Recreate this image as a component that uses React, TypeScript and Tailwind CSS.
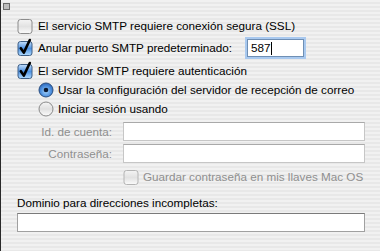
import React from 'react';

function Checkbox({ checked = false, disabled = false }: { checked?: boolean; disabled?: boolean }) {
  return (
    <svg width="16" height="16" viewBox="0 0 16 16" className="shrink-0 overflow-visible">
      <defs>
        <linearGradient id="cbOff" x1="0" y1="0" x2="0" y2="1">
          <stop offset="0" stopColor="#f4f4f4" />
          <stop offset="0.5" stopColor="#e2e2e2" />
          <stop offset="1" stopColor="#fbfbfb" />
        </linearGradient>
        <linearGradient id="cbOn" x1="0" y1="0" x2="0" y2="1">
          <stop offset="0" stopColor="#c6e0fb" />
          <stop offset="0.5" stopColor="#4d92e3" />
          <stop offset="1" stopColor="#b2dcff" />
        </linearGradient>
      </defs>
      <rect
        x="1"
        y="1.5"
        width="14"
        height="14"
        rx="2.5"
        fill={checked ? 'url(#cbOn)' : 'url(#cbOff)'}
        stroke={checked ? '#3e5f86' : disabled ? '#b4b4b4' : '#8c8c8c'}
        strokeWidth="1"
      />
      {checked && (
        <path d="M3.8 8.2 L6.8 12.6 L12.8 0" fill="none" stroke="#000" strokeWidth="2.6" strokeLinecap="round" strokeLinejoin="round" />
      )}
    </svg>
  );
}

function Radio({ checked = false }: { checked?: boolean }) {
  return (
    <svg width="16" height="16" viewBox="0 0 16 16" className="shrink-0">
      <defs>
        <radialGradient id="rOn" cx="0.5" cy="0.6" r="0.6">
          <stop offset="0" stopColor="#a8d6ff" />
          <stop offset="0.6" stopColor="#4f91de" />
          <stop offset="1" stopColor="#2a63b8" />
        </radialGradient>
        <linearGradient id="rOff" x1="0" y1="0" x2="0" y2="1">
          <stop offset="0" stopColor="#f6f6f6" />
          <stop offset="0.5" stopColor="#e0e0e0" />
          <stop offset="1" stopColor="#fcfcfc" />
        </linearGradient>
      </defs>
      <circle cx="8" cy="8" r="7" fill={checked ? 'url(#rOn)' : 'url(#rOff)'} stroke={checked ? '#2b4f80' : '#8a8a8a'} strokeWidth="1" />
      {checked && <circle cx="8" cy="8" r="2.3" fill="#0b1a33" />}
    </svg>
  );
}

export default function App() {
  return (
    <div
      className="w-[380px] h-[251px] overflow-hidden whitespace-nowrap border-l border-[#2a2a2a] text-[11.7px] leading-none text-black bg-[repeating-linear-gradient(180deg,#f1f1f1_0px,#f1f1f1_2px,#e8e8e8_2px,#e8e8e8_4px)]"
      style={{ fontFamily: '"Liberation Sans", Arial, sans-serif' }}
    >
      <div className="pt-[3px] pl-[2px] h-[17px]">
        <div className="w-[7px] h-[7px] border border-[#6b6b6b] bg-[#bdbdbd]" />
      </div>

      {/* top checkboxes */}
      <div className="pl-[16px] flex flex-col">
        <div className="flex items-center gap-[5px] h-[17px]">
          <Checkbox />
          <span>El servicio SMTP requiere conexión segura (SSL)</span>
        </div>
        <div className="flex items-center gap-[5px] h-[24px] mt-[2px]">
          <Checkbox checked />
          <span>Anular puerto SMTP predeterminado:</span>
          <div className="ml-[10px] w-[57px] h-[18px] bg-white border border-[#6f8fb4] shadow-[0_0_0_2px_#a9c9ef] flex items-center pl-[3px]">
            587<span className="w-px h-[13px] bg-black" />
          </div>
        </div>
        <div className="flex items-center gap-[5px] h-[19px] mt-[1px]">
          <Checkbox checked />
          <span>El servidor SMTP requiere autenticación</span>
        </div>
      </div>

      {/* radios */}
      <div className="pl-[37px] flex flex-col mt-[1px]">
        <div className="flex items-center gap-[4px] h-[18px]">
          <Radio checked />
          <span>Usar la configuración del servidor de recepción de correo</span>
        </div>
        <div className="flex items-center gap-[4px] h-[18px] mt-[1px]">
          <Radio />
          <span>Iniciar sesión usando</span>
        </div>
      </div>

      {/* account fields */}
      <div className="grid grid-cols-[111px_242px] gap-x-[11px] gap-y-[3px] mt-[4px] text-[#8f8f8f]">
        <div className="flex items-center justify-end h-[19px]">Id. de cuenta:</div>
        <div className="h-[19px] bg-white border border-[#c6c6c6] border-t-[#a9a9a9]" />
        <div className="flex items-center justify-end h-[19px]">Contraseña:</div>
        <div className="h-[19px] bg-white border border-[#c6c6c6] border-t-[#a9a9a9]" />
      </div>

      <div className="pl-[122px] flex items-center gap-[4px] h-[18px] mt-[5px] text-[#8f8f8f]">
        <Checkbox disabled />
        <span>Guardar contraseña en mis llaves Mac OS</span>
      </div>

      {/* domain */}
      <div className="pl-[16px] mt-[10px]">
        <div className="h-[14px] flex items-center">Dominio para direcciones incompletas:</div>
        <div className="mt-[3px] w-[348px] h-[19px] bg-white border border-[#a0a0a0] border-t-[#7a7a7a]" />
      </div>
    </div>
  );
}
